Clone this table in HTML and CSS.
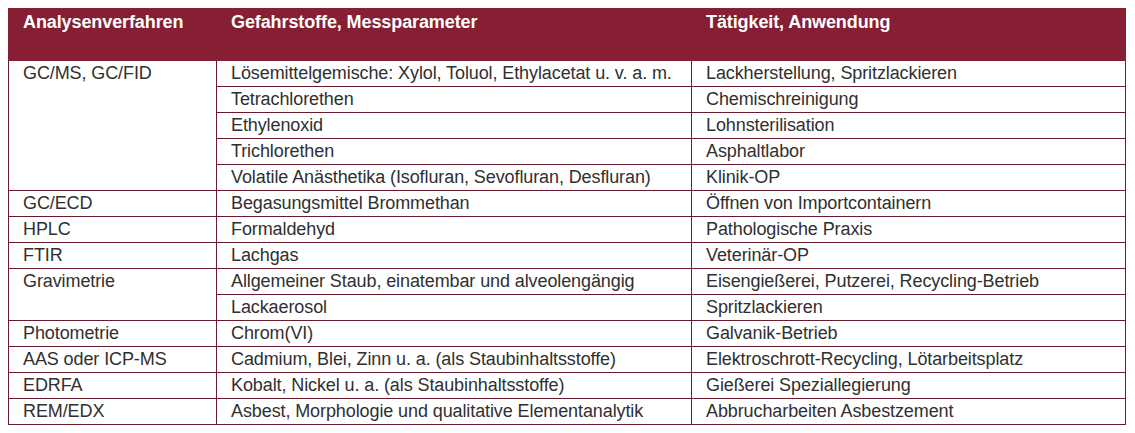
FILE: index.html
```html
<!DOCTYPE html>
<html lang="de">
<head>
<meta charset="utf-8">
<link rel="stylesheet" href="styles.css">
</head>
<body>
<table class="tbl">
  <colgroup>
    <col class="c1"><col class="c2"><col class="c3">
  </colgroup>
  <thead>
    <tr><th>Analysenverfahren</th><th>Gefahrstoffe, Messparameter</th><th>Tätigkeit, Anwendung</th></tr>
  </thead>
  <tbody>
    <tr><td rowspan="5">GC/MS, GC/FID</td><td>Lösemittelgemische: Xylol, Toluol, Ethylacetat u. v. a. m.</td><td>Lackherstellung, Spritzlackieren</td></tr>
    <tr><td>Tetrachlorethen</td><td>Chemischreinigung</td></tr>
    <tr><td>Ethylenoxid</td><td>Lohnsterilisation</td></tr>
    <tr><td>Trichlorethen</td><td>Asphaltlabor</td></tr>
    <tr><td>Volatile Anästhetika (Isofluran, Sevofluran, Desfluran)</td><td>Klinik-OP</td></tr>
    <tr><td>GC/ECD</td><td>Begasungsmittel Brommethan</td><td>Öffnen von Importcontainern</td></tr>
    <tr><td>HPLC</td><td>Formaldehyd</td><td>Pathologische Praxis</td></tr>
    <tr><td>FTIR</td><td>Lachgas</td><td>Veterinär-OP</td></tr>
    <tr><td rowspan="2">Gravimetrie</td><td>Allgemeiner Staub, einatembar und alveolengängig</td><td>Eisengießerei, Putzerei, Recycling-Betrieb</td></tr>
    <tr><td>Lackaerosol</td><td>Spritzlackieren</td></tr>
    <tr><td>Photometrie</td><td>Chrom(VI)</td><td>Galvanik-Betrieb</td></tr>
    <tr><td>AAS oder ICP-MS</td><td>Cadmium, Blei, Zinn u. a. (als Staubinhaltsstoffe)</td><td>Elektroschrott-Recycling, Lötarbeitsplatz</td></tr>
    <tr><td>EDRFA</td><td>Kobalt, Nickel u. a. (als Staubinhaltsstoffe)</td><td>Gießerei Speziallegierung</td></tr>
    <tr><td>REM/EDX</td><td>Asbest, Morphologie und qualitative Elementanalytik</td><td>Abbrucharbeiten Asbestzement</td></tr>
  </tbody>
</table>
</body>
</html>
```

FILE: styles.css
```css
html, body {
  margin: 0;
  padding: 0;
  background: #ffffff;
}
body {
  padding: 8px;
  font-family: "Liberation Sans", Arial, sans-serif;
}
.tbl {
  border-collapse: collapse;
  table-layout: fixed;
  width: 1117px;
}
.c1 { width: 208px; }
.c2 { width: 475px; }
.c3 { width: 434px; }
.tbl th {
  background: #861f34;
  color: #ffffff;
  font-weight: bold;
  font-size: 18px;
  letter-spacing: -0.1px;
  text-align: left;
  vertical-align: top;
  height: 52px;
  box-sizing: border-box;
  padding: 3px 0 0 14px;
  border: 1px solid #861f34;
}
.tbl td {
  color: #303030;
  font-size: 18px;
  letter-spacing: -0.1px;
  height: 26px;
  box-sizing: border-box;
  padding: 0 0 0 14px;
  line-height: 24px;
  vertical-align: top;
  border: 1px solid #6a1a2c;
  white-space: nowrap;
}
```
